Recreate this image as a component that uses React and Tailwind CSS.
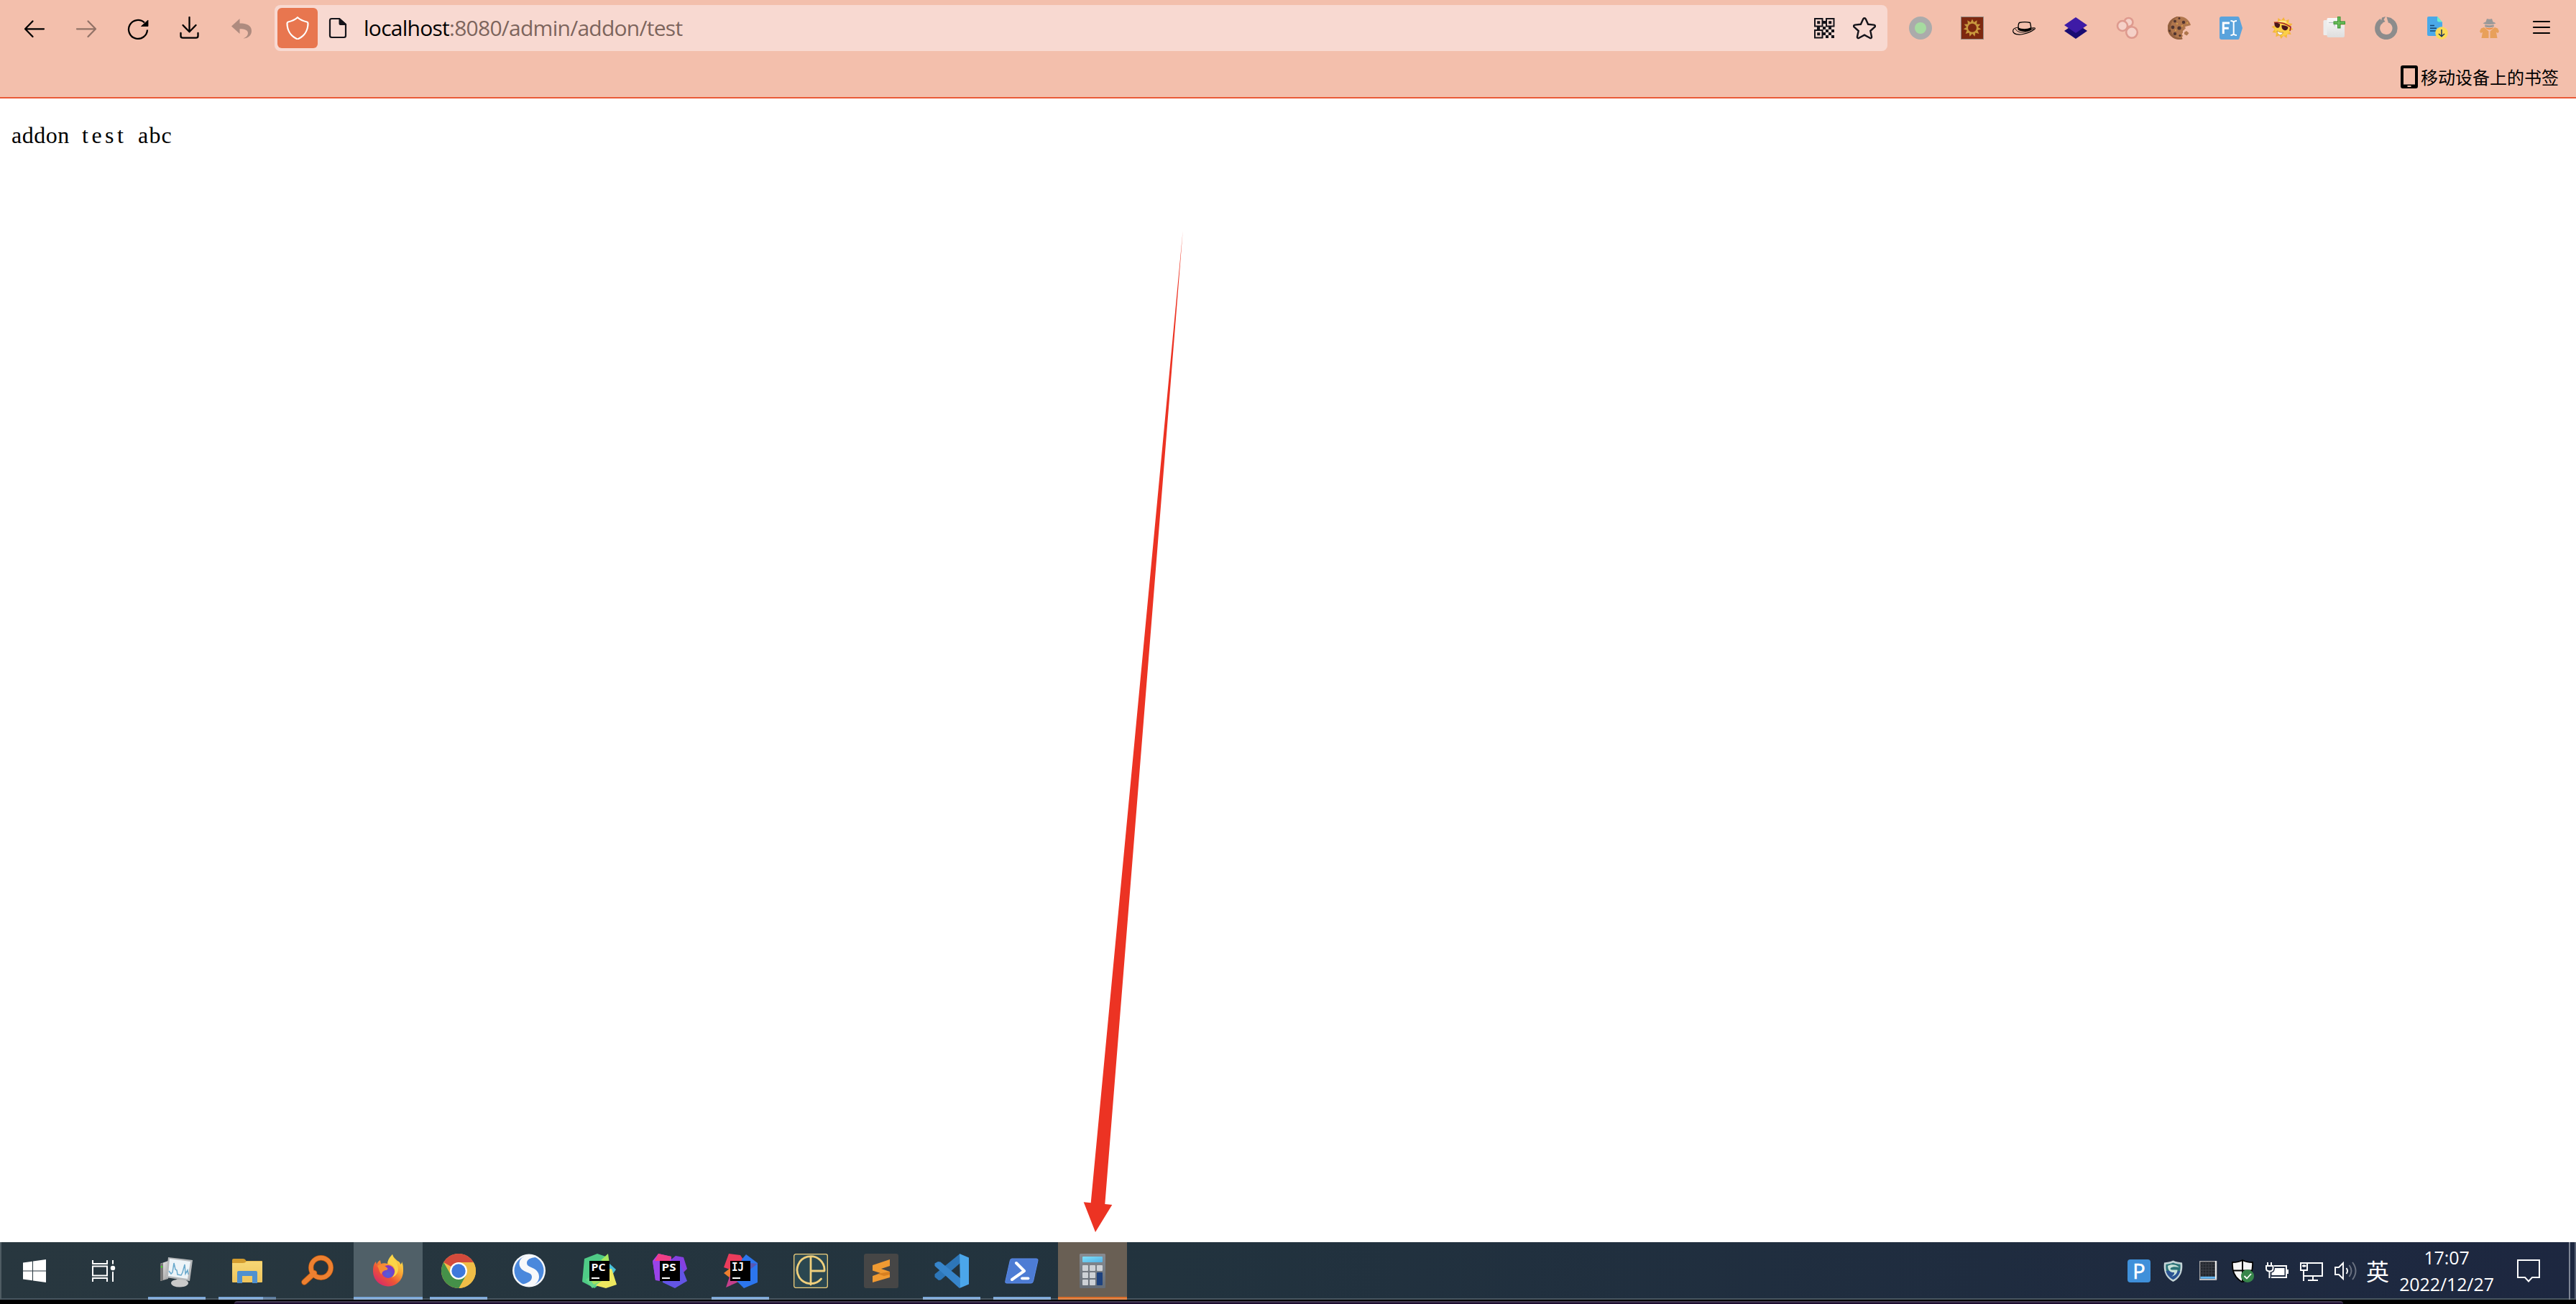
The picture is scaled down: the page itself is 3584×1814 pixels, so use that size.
import React from "react";

/* ---------- browser toolbar icons (drawn on a 32 unit box) ---------- */

function Svg({ children, className = "w-8 h-8", box = "0 0 32 32" }) {
  return (
    <svg viewBox={box} className={"block shrink-0 " + className} fill="none">
      {children}
    </svg>
  );
}

const line = {
  stroke: "#000",
  strokeWidth: 2.3,
  strokeLinecap: "round",
  strokeLinejoin: "round",
};

/* Outline of a star with the given number of points. */
function starPoints(count, cx, cy, outer, inner, turn = 0) {
  return Array.from({ length: count * 2 }, (_, i) => {
    const r = i % 2 === 0 ? outer : inner;
    const a = (Math.PI * i) / count - Math.PI / 2 + turn;
    return (cx + r * Math.cos(a)).toFixed(2) + "," + (cy + r * Math.sin(a)).toFixed(2);
  }).join(" ");
}

const BackIcon = () => (
  <Svg>
    <path d="M29 17.300H3.500M13.500 6.500 3 17.300 13.500 28" {...line} />
  </Svg>
);

const ForwardIcon = () => (
  <Svg>
    <g opacity="0.4">
      <path d="M3 17.300h25.500M18.500 6.500 29 17.300 18.500 28" {...line} />
    </g>
  </Svg>
);

const ReloadIcon = () => (
  <Svg>
    <path d="M29 18.500A13 13 0 1 1 25 8.500" {...line} strokeLinecap="butt" />
    <path d="M30 5v8.500h-9.500z" fill="#000" stroke="#000" strokeWidth="0.8" strokeLinejoin="round" />
  </Svg>
);

const DownloadIcon = () => (
  <Svg>
    <path d="M15.500 1v20M6.500 12l9 9.300L24.500 12" {...line} />
    <path d="M3.500 23v4q0 2.700 3 2.700h18q3 0 3-2.700v-4" {...line} />
  </Svg>
);

const UndoIcon = () => (
  <Svg>
    <path
      d="M2 13.500 13.500 3v6.500C23 9.500 30 12 30 20c0 6-5 10.500-11.500 10.500C23 28.500 25 26 25 23c0-4-4-5.800-11.500-5.800V24z"
      fill="#ae8b7f"
    />
  </Svg>
);

const ShieldIcon = () => (
  <Svg>
    <path
      d="M16 1.300c3.500 3.200 7.500 5 13 6.200 1 .2 1.500.9 1.500 2 0 9.500-5 17.500-13.300 21.500-.9.400-1.500.4-2.400 0C6.500 27 1.500 19 1.500 9.500c0-1.100.5-1.800 1.500-2C8.500 6.300 12.500 4.500 16 1.300z"
      stroke="#fff"
      strokeWidth="2.200"
    />
  </Svg>
);

const PageIcon = () => (
  <Svg className="w-[26px] h-[30px]" box="0 0 26 30">
    <path d="M15 2H4.500Q2 2 2 4.500v21Q2 28 4.500 28h17q2.500 0 2.500-2.500V10z" stroke="#15141a" strokeWidth="2.200" />
    <path d="M14.500 1h1L25 9.500V11h-8.500q-2 0-2-2z" fill="#15141a" />
  </Svg>
);

const QrIcon = () => (
  <Svg className="w-[29px] h-[29px]" box="0 0 29 29">
    <path d="M1 1h10.500v10.500H1zM17 1h10.500v10.500H17zM1 17h10.500v10.500H1z" stroke="#15141a" strokeWidth="2" />
    <path
      d="M4.200 4.200h4v4h-4zM20.200 4.200h4v4h-4zM4.200 20.200h4v4h-4zM12 4h4v4h-4zM4 12h4v4H4zM12 12h4v4h-4zM20 12h4v4h-4zM16 16h4v4h-4zM24 16h4v4h-4zM12 20h4v4h-4zM20 20h4v4h-4zM16 24h4v4h-4zM24 24h4v4h-4z"
      fill="#15141a"
    />
  </Svg>
);

const StarIcon = () => (
  <Svg>
    <path
      d="M16 2.200c.8 0 1.400.4 1.800 1.300l3.300 7.300 8 .8c1.800.2 2.400 1.900 1.100 3.100l-5.900 5.300 1.700 8c.3 1.700-1 2.700-2.500 1.800L16 25.600l-7.500 4.200c-1.500.9-2.800-.1-2.500-1.800l1.700-8-5.900-5.300c-1.300-1.200-.7-2.900 1.100-3.100l8-.8 3.300-7.300c.4-.9 1-1.300 1.800-1.300z"
      stroke="#15141a"
      strokeWidth="2.400"
    />
  </Svg>
);

/* ---------- extension icons ---------- */

const RingIcon = () => (
  <Svg>
    <circle cx="16" cy="16" r="16" fill="#ababab" />
    <circle cx="16" cy="16" r="8" fill="#a6dba0" />
  </Svg>
);

const SunTileIcon = () => (
  <Svg>
    <rect x="0.500" y="0.500" width="31" height="31" fill="#7e2810" stroke="#8f8780" />
    <polygon points={starPoints(11, 16, 15.8, 12.4, 8)} fill="#c9983e" />
    <circle cx="16" cy="15.800" r="6" fill="#7e2810" />
  </Svg>
);

const HatIcon = () => (
  <Svg>
    <path d="M8.500 17.500C7.700 13 8.200 10 9.500 8.500c4-1 11-1 15 0 .8 2.500 1 5 1.500 8.500" stroke="#000" strokeWidth="1.300" />
    <path d="M7.500 15c5 3 13 3 18 0l1 3c-2 2-5.500 3-9.500 2.800-5 0-8-1-9.500-2.500z" fill="#000" />
    <path d="M8 15c-5 .5-8 2.500-7.200 6 1 3.500 7.200 5 13.700 3.500 7-1.500 15-5 16.800-7.500.5-1.500-1.500-1.500-4.800-.8" stroke="#000" strokeWidth="1.200" />
    <path d="M4 17c2 5 9 6 15 4l11-4" stroke="#000" strokeWidth="0.900" />
  </Svg>
);

const LayersIcon = () => (
  <Svg>
    <path d="M16 9l16 11-16 11L0 20z" fill="#190c72" />
    <path d="M16 1l16 11-16 11L0 12z" fill="#3e1ba6" />
  </Svg>
);

const BubblesIcon = () => (
  <Svg>
    <g fill="#f5d1c8" stroke="#de9a8e" strokeWidth="2.600">
      <circle cx="17.500" cy="8" r="6" />
      <circle cx="9" cy="13" r="7" />
      <circle cx="22" cy="22" r="7.800" />
    </g>
  </Svg>
);

const CookieIcon = () => (
  <Svg>
    <path d="M16 0a16 16 0 1 0 4.500 31.300c-1-2-1-3.500.8-4.300-2-1.500-2-3.500 0-4.500-1-2 0-3.500 2-4-.8-3 .5-5 3.200-5l5.500-1.500C30 4.500 24 0 16 0z" fill="#b0764d" />
    <path d="M16 0a16 16 0 1 0 4.500 31.300l-.5-1.800C10 31 4 24 4 15.500 4 8 9 2 16 0z" fill="#93603f" />
    <g fill="#523630">
      <circle cx="10" cy="6.500" r="2" />
      <circle cx="7" cy="15" r="2.400" />
      <circle cx="16" cy="16" r="2.600" />
      <circle cx="22" cy="8" r="2.200" />
      <circle cx="10" cy="24" r="2.200" />
      <circle cx="17" cy="26.500" r="1.600" />
      <circle cx="16" cy="2.500" r="1.500" />
      <circle cx="2.600" cy="20" r="1.400" />
    </g>
    <g fill="#e0a84a">
      <circle cx="13" cy="10" r="1" />
      <circle cx="20" cy="13" r="1" />
      <circle cx="11" cy="19" r="1" />
      <circle cx="27" cy="9" r="1" />
    </g>
    <path d="M23 22l3-2 3.500 3-3 3.500-3.500-2zM22 16l2-1.500 1 2-2 1.300z" fill="#b0764d" />
  </Svg>
);

const FieldIcon = () => (
  <Svg>
    <path d="M3 0h22.500q1.500 0 2 1.500L32 16l-4.500 14.500q-.5 1.500-2 1.500H3q-3 0-3-3V3q0-3 3-3z" fill="#5aa3dc" />
    <path d="M5.300 24V9H14M5.300 16.300h7.500" stroke="#fff" strokeWidth="3" />
    <path d="M15.500 6q3.500 0 4.200 2Q20.500 6 24 6M19.700 8v16M15.500 26q3.500 0 4.200-2 .8 2 4.300 2" stroke="#fff" strokeWidth="2" />
  </Svg>
);

const CoolSunIcon = () => (
  <Svg>
    <polygon points={starPoints(12, 15.5, 16, 15.2, 10.8, 0.12)} fill="#f6b73a" />
    <circle cx="15.500" cy="16" r="11" fill="#fbcf47" />
    <path d="M8 9q6-4 13-1" stroke="#fde98a" strokeWidth="2" />
    <path d="M4 8.500c7-1 16 1 23 6l-1 5.500" stroke="#a8252a" strokeWidth="1.600" />
    <path d="M4.500 9c2.500-.500 6 0 7.500 1.500.5 3.500-1.200 5.700-3.700 5.200S4 12 4.500 9zM14.500 12c3.500 0 7 1 9 2.800-.3 3.700-2.800 5-5.500 4.200s-4-3.700-3.500-7z" fill="#4a171b" />
    <path d="M8 20c3.500 2 5.500 2.500 8.500 2-1 3-3.300 4-5 3.500S8 22.500 8 20z" fill="#fff" stroke="#a8611c" strokeWidth="0.600" />
  </Svg>
);

const AddTabIcon = () => (
  <Svg>
    <defs>
      <linearGradient id="tabpaper" x1="0" y1="0" x2="0" y2="1">
        <stop offset="0" stopColor="#f8f8f8" />
        <stop offset="1" stopColor="#dedede" />
      </linearGradient>
    </defs>
    <rect x="0.500" y="5" width="16" height="21" rx="1.500" fill="#ececec" />
    <path d="M5.500 3.500Q5.500 2 7 2h13v10h10v15q0 2-2 2H7.500q-2 0-2-2z" fill="url(#tabpaper)" />
    <path d="M8 8.500h8v5" stroke="#b8bcc4" strokeWidth="1.200" />
    <path d="M20 0h4.500v6.500H31v4.500h-6.500V16.500H20V11h-5.500V6.500H20z" fill="#3f9a36" />
    <path d="M21.300 1h1.800v7H30v1.800h-6.900v5.500h-1.800V9.800H15.500V8h5.800z" fill="#73c262" />
  </Svg>
);

const LoopIcon = () => (
  <Svg>
    <path d="M21.500 5.600A12.200 12.200 0 1 1 9.500 6" stroke="#8c8c8c" strokeWidth="7" />
    <path d="M10 1.500L15 0l-2.500 4.500 2 2.500L8 10z" fill="#8c8c8c" />
    <path d="M16.500 0.500L23 2l.5 5-4.500 2z" fill="#8c8c8c" />
  </Svg>
);

const FileDownIcon = () => (
  <Svg>
    <path d="M3 0h12l7 8v17q0 2-2 2H3q-2 0-2-2V2q0-2 2-2z" fill="#4aa9e8" />
    <path d="M15 0l7 7.500h-5q-2 0-2-2z" fill="#6cf0c9" />
    <path d="M5 12.500h6M5 16.300h9M5 20h9" stroke="#14456f" strokeWidth="1.400" />
    <circle cx="21" cy="23" r="8.700" fill="#fbdb55" />
    <path d="M21 18v9.500M17 24l4 3.800 4-3.800" stroke="#16325c" strokeWidth="1.500" />
  </Svg>
);

const SpyIcon = () => (
  <Svg>
    <path d="M6.500 9.500q2-1.500 4-2l1.500-4.500q4 1.500 7 0l1.500 4.500q2.500.5 4 2-3.500 1.500-9 1.500t-9-1.500zM9.500 11.500q6 1.500 12 0l.5 2.500q-6.500 2.500-13 0z" fill="#999" />
    <path d="M9.500 15q6 2.500 12 0-2 3.300-6 3.300t-6-3.300z" fill="#ee9040" />
    <path d="M4 16.500l4-1.500 6.500 5.500V30H4.500l1.500-8-2.500 1L2 20.500zM27 16.500L23 15l-6.500 5.500V30h10L25 22l2.500 1 1.500-2.500z" fill="#e8a05a" />
  </Svg>
);

const MenuIcon = () => (
  <Svg>
    <path d="M5 7h22M5 15h22M5 23h22" stroke="#000" strokeWidth="2.200" strokeLinecap="round" />
  </Svg>
);

const PhoneIcon = () => (
  <Svg className="w-6 h-8" box="0 0 24 32">
    <path fillRule="evenodd" d="M3 0h18q3 0 3 3v26q0 3-3 3H3q-3 0-3-3V3q0-3 3-3zM4 4v22.500h16V4zM9.500 28v2h5v-2z" fill="#000" />
  </Svg>
);

/* ---------- taskbar icons (drawn on a 48 unit box) ---------- */

function Big({ children }) {
  return (
    <Svg className="w-12 h-12" box="0 0 48 48">
      {children}
    </Svg>
  );
}

const WindowsIcon = () => (
  <Big>
    <path d="M8 12.500l13-1.800v12.800H8zM22 10.500L40 8v15.500H22zM8 24.500h13v12.800L8 35.500zM22 24.500h18V40l-18-2.500z" fill="#fff" />
  </Big>
);

const TaskViewIcon = () => (
  <Big>
    <path d="M9 9v5h20V9M9 17.500h20v13H9zM9 39v-5h20v5M37 9v5.500M37 25v14" stroke="#fff" strokeWidth="2" />
    <circle cx="37" cy="20" r="3.200" fill="#fff" />
  </Big>
);

const MonitorIcon = () => (
  <Big>
    <defs>
      <linearGradient id="metal" x1="0" y1="0" x2="1" y2="1">
        <stop offset="0" stopColor="#f2f2f2" />
        <stop offset="1" stopColor="#9b9b9b" />
      </linearGradient>
    </defs>
    <path d="M1 14l11-4v25L1 38z" fill="url(#metal)" />
    <path d="M1 14l4-1v24l-4 1z" fill="#777" />
    <rect x="2" y="17" width="2" height="2.500" fill="#48d62e" />
    <path d="M24 34h9l1 7H23z" fill="#999" />
    <ellipse cx="28" cy="41" rx="12" ry="5.500" fill="#c9c9c9" />
    <path d="M12 5l34 4-4 29L9 33z" fill="#b5b8ba" />
    <path d="M14 7l29 4-4 24-27-4z" fill="#edf4f8" />
    <path d="M13 24l3 4 2-2 2-13 2 9 2 1 1 6 5 1 2-4 3-11 1 13 3-5 1 6" stroke="#6aa9cc" strokeWidth="1.500" />
  </Big>
);

const FolderIcon = () => (
  <Big>
    <defs>
      <linearGradient id="fold" x1="0" y1="0" x2="0" y2="1">
        <stop offset="0" stopColor="#f7d775" />
        <stop offset="1" stopColor="#eec45c" />
      </linearGradient>
    </defs>
    <path d="M3 9q0-2 2-2h13q3 0 4.500 3H45v9H3z" fill="#d39c2e" />
    <path d="M3 13h15q3 0 5-2.500h20.500Q45 10.500 45 12v27q0 1-1 1H4q-1 0-1-1z" fill="url(#fold)" />
    <path d="M10 41V26q0-2 2-2h24q2 0 2 2v15h-7V31H17v10z" fill="#4f90cf" />
  </Big>
);

const EverythingIcon = () => (
  <Big>
    <path d="M5.500 39.500L19 27" stroke="#b65710" strokeWidth="8.500" strokeLinecap="round" />
    <circle cx="28.500" cy="19.500" r="13.800" stroke="#b65710" strokeWidth="7.400" />
    <path d="M5.500 39.500L19 27" stroke="#ee8030" strokeWidth="6.800" strokeLinecap="round" />
    <circle cx="28.500" cy="19.500" r="13.800" stroke="#ee8030" strokeWidth="6" />
  </Big>
);

const FirefoxIcon = () => (
  <Big>
    <defs>
      <linearGradient id="ffBody" x1="0.850" y1="0.100" x2="0.200" y2="0.950">
        <stop offset="0" stopColor="#fbe04a" />
        <stop offset="0.350" stopColor="#f9a233" />
        <stop offset="0.650" stopColor="#ee5536" />
        <stop offset="1" stopColor="#d92a68" />
      </linearGradient>
      <radialGradient id="ffCore" cx="0.500" cy="0.700" r="0.700">
        <stop offset="0" stopColor="#4f62d8" />
        <stop offset="1" stopColor="#8b2fc0" />
      </radialGradient>
    </defs>
    <path d="M30 1c1 4 4 6 7 9 3 1 4 3 4 5 2-1 2-3 2-4 2 4 2 8 2 13a21 21 0 0 1-42 1c0-7 1-11 4-14l1 4c1-3 3-5 5-6l1 5c3-1 6-1 9 0 0-5 4-8 7-13z" fill="url(#ffBody)" />
    <circle cx="24" cy="25" r="9" fill="url(#ffCore)" />
    <path d="M30 1c-4 4-7 8-6 13 2 1 6 1 8 5 3 5 1 11-3 14 7-2 11-9 8-17 0-6-7-8-7-15z" fill="#fbd548" />
    <path d="M9 17c3-3 9-2 14 3 1 1 0 3-3 3-3 1-5 3-5 6-4-4-3-7-6-12z" fill="#f78c33" />
  </Big>
);

const ChromeIcon = () => (
  <Big>
    <circle cx="24" cy="24" r="24" fill="#f0bd47" />
    <path d="M24 24L3.200 12A24 24 0 0 1 44.800 12z" fill="#d34a3c" />
    <path d="M24 24L34.400 30 24.500 48A24 24 0 0 1 3.200 12L13.600 30z" fill="#459149" />
    <path d="M24 12h20.800A24 24 0 0 1 24.500 48L35 30z" fill="#f0bd47" />
    <circle cx="24" cy="24" r="12" fill="#fff" />
    <circle cx="24" cy="24" r="9.700" fill="#3e78dc" />
  </Big>
);

const SogouIcon = () => (
  <Big>
    <circle cx="24" cy="23.500" r="23" fill="#f4f6f8" />
    <circle cx="24" cy="23.500" r="20.500" fill="#4a88dc" />
    <path
      d="M26 2C17 2 10.500 7 10.500 13.500c0 7 5 10 11 12.500 4.500 1.500 6.500 3 6.500 6.500 0 5-5 8.500-13 10 4 2.500 8 3 12 2.500C34 43 38 38 38 32c0-7-5-10.500-11-13-4-1.500-6-3-6-6C21 8 26 5.500 34 5z"
      fill="#f7f8fa"
    />
  </Big>
);

function JetLabel({ text, mono }) {
  return (
    <g>
      <rect x="10" y="10" width="28" height="28" fill="#000" />
      <text
        x={mono ? 12 : 12.5}
        y="23.500"
        fill="#fff"
        fontSize={mono ? 15 : 14.5}
        fontWeight="700"
        fontFamily={mono ? "'DejaVu Sans Mono', monospace" : "'Open Sans', sans-serif"}
        textLength={mono ? 17 : 20}
        lengthAdjust="spacingAndGlyphs"
      >
        {text}
      </text>
      <rect x="13" y="33" width="11" height="2" fill="#fff" />
    </g>
  );
}

const PyCharmIcon = () => (
  <Big>
    <path d="M3 7L21 0l12 4-5 30-8 12-3 2L0 39z" fill="#4fcb86" />
    <path d="M26 9L36 0l2 14z" fill="#a5e85f" />
    <path d="M36 12l11 10-7 10-8-6z" fill="#49bfd8" />
    <path d="M41 21l7 22-15 5-19-5 10-20z" fill="#eee85f" />
    <path d="M5 36l12-8 10 10-7 5-6 5z" fill="#63d58c" />
    <path d="M12 37h18l-14 6z" fill="#a4e060" />
    <JetLabel text="PC" />
  </Big>
);

const PhpStormIcon = () => (
  <Big>
    <path d="M0 10L8 0l18 4 0 14L6 37H4z" fill="#b23ff0" />
    <path d="M8 0l18 4-3 8-20-2z" fill="#ef3f86" />
    <path d="M26 8l6-5 11 2 5 16-8 8-14-6z" fill="#8540e0" />
    <path d="M37 10l11 28-17 10-17-8V30z" fill="#6355e6" />
    <path d="M0 10l10 0v28L4 37z" fill="#9a43e8" />
    <JetLabel text="PS" />
  </Big>
);

const IntelliJIcon = () => (
  <Big>
    <path d="M1 19L8 0l16 2 8 12-16 10z" fill="#ea3c5b" />
    <path d="M1 27l9-7v14z" fill="#ef7e2e" />
    <path d="M4 47l6-18 14 9z" fill="#c43f8c" />
    <path d="M32 1l16 12v27L29 48 19 38 26 8z" fill="#2c76ee" />
    <path d="M38 13l10 1-12 9z" fill="#5757b5" />
    <JetLabel text="IJ" mono />
  </Big>
);

const CeIcon = () => (
  <Big>
    <rect x="0.700" y="0.700" width="46.600" height="46.600" rx="2.500" fill="#2b4750" stroke="#f0cf7c" strokeWidth="1.300" />
    <path d="M38.500 35A19 19 0 1 1 43 24H24M24 5v38" stroke="#f0cf7c" strokeWidth="2.800" strokeLinecap="round" strokeLinejoin="round" />
  </Big>
);

const SublimeIcon = () => (
  <Big>
    <rect width="48" height="48" rx="3" fill="#464646" />
    <path d="M12 16L36 8v9l-12 4 12 4v8L12 40v-9l11-4-11-3.500z" fill="#f09a32" />
    <path d="M36 25v4l-8 2-9-3 5-1z" fill="#d77f20" />
  </Big>
);

const CodeIcon = () => (
  <Big>
    <path d="M35 0.500L36 13 9 36.500 6 37l-5.500-4.500v-4z" fill="#2d76b8" />
    <path d="M0.500 15.500v-2L5 11l3.500.5L36 34v13.500l-1.500.2L0.500 17z" fill="#3785cb" />
    <path d="M35 0l13 5.500v37L35 48l1-1z" fill="#4ba6ea" />
  </Big>
);

const PowerShellIcon = () => (
  <Big>
    <path d="M10 7h34q2.500 0 2 2.500l-6.500 29q-.6 2.500-3 2.500h-34Q.2 41 .8 38.500l6.500-29Q7.800 7 10 7z" fill="#4d7cd4" stroke="#5c8bea" />
    <path d="M16 13l11 11-17 12" stroke="#fff" strokeWidth="4" strokeLinecap="round" strokeLinejoin="round" />
    <path d="M24 34.300h8.500" stroke="#fff" strokeWidth="3.800" strokeLinecap="round" />
  </Big>
);

const CALC_KEYS = [
  [10, 16], [20, 16], [30, 16],
  [10, 26], [20, 26],
  [10, 36], [20, 36],
];

const CalculatorIcon = () => (
  <Big>
    <defs>
      <linearGradient id="calcBody" x1="0" y1="0" x2="0" y2="1">
        <stop offset="0" stopColor="#878b91" />
        <stop offset="1" stopColor="#656d77" />
      </linearGradient>
      <linearGradient id="calcScreen" x1="0" y1="0" x2="1" y2="1">
        <stop offset="0" stopColor="#7de0fa" />
        <stop offset="1" stopColor="#54b0e4" />
      </linearGradient>
    </defs>
    <rect x="6" y="0" width="36" height="48" rx="1.500" fill="url(#calcBody)" />
    <rect x="10" y="4" width="28" height="8" rx="1" fill="url(#calcScreen)" />
    {CALC_KEYS.map(([x, y]) => (
      <rect key={x + "-" + y} x={x} y={y} width="8" height="8" rx="1" fill="#cdd1d6" />
    ))}
    <rect x="30" y="26" width="8" height="18" rx="1" fill="#1e427e" />
  </Big>
);

/* ---------- tray icons ---------- */

const ParkIcon = () => (
  <div className="flex h-8 w-8 items-center justify-center rounded-[4px] bg-[#3f90da] font-['Open_Sans',sans-serif] text-[29px] leading-8 text-white [-webkit-text-stroke:0.6px_white]">
    P
  </div>
);

const GreenShieldIcon = () => (
  <Svg>
    <path d="M15.500 1.500c4 2 8 2.500 12.500 3 1.500 12-2 21-12.500 26.500C5 25.500 1.500 16 3 4.500c4.500-.5 8.500-1 12.500-3z" fill="#c3d3d6" />
    <path d="M15.500 4.500c3.500 1.500 6.500 2 10 2.300C26.500 16 23.500 23.500 15.500 28 7.500 23.500 4.500 16 5.500 6.800c3.500-.3 6.500-.8 10-2.300z" fill="#2c7378" />
    <path d="M5.500 16h19.800c-1 5-4.300 9.300-9.800 12-5.500-2.700-9-7-10-12z" fill="#2b5493" />
    <path d="M8 9c4-2.500 11-2.500 16 2-5-1-10-1-12 1-1 1.500 0 2.500 2 2.500h7.500c0 4.500-3 8-8.500 9.500 3-2 4.500-4 4-6-5 .5-9-2.500-9-9z" fill="#c8e2d9" />
  </Svg>
);

const PadIcon = () => (
  <Svg>
    <rect x="4.700" y="2.700" width="23" height="25" fill="#22262d" stroke="#aaa" strokeWidth="1.300" />
    <path d="M9 3v21M13 3v21M17 3v21M21 3v21M5 7h22M5 11h22M5 15h22M5 19h22" stroke="#3c4048" strokeWidth="1" />
    <path d="M26.800 2v25" stroke="#eee" strokeWidth="2" />
    <path d="M5.500 25.300h20.500" stroke="#64b5f0" strokeWidth="3" />
    <path d="M4 28.200h24" stroke="#eee" strokeWidth="1" />
  </Svg>
);

const DefenderIcon = () => (
  <Svg>
    <path d="M16 1c4 2.500 9 3 14 3 .8 12-3 22-14 27.500C5 26 1.200 16 2 4c5 0 10-.500 14-3z" fill="#f5f5f5" stroke="#000" strokeWidth="1.800" />
    <path d="M16 1v30M2 15.500h28" stroke="#000" strokeWidth="2" />
    <circle cx="23" cy="23" r="9" fill="#37854a" />
    <path d="M18.500 23l3.500 3.500 6-6.500" stroke="#fff" strokeWidth="1.800" />
  </Svg>
);

const BatteryIcon = () => (
  <Svg>
    <path d="M12 9h17v16H8M3 4v5M8 4v5" stroke="#fff" strokeWidth="2" />
    <path d="M1 9h9.500v3.500q0 4-4.750 4T1 12.500z" stroke="#fff" strokeWidth="2" />
    <path d="M13 12h13.500v10H8.500v-3.500q4.500-1 4.500-6.500z" fill="#fff" />
    <path d="M29 14h3v6h-3z" fill="#fff" />
    <path d="M5.500 17v9" stroke="#fff" strokeWidth="2" />
  </Svg>
);

const NetworkIcon = () => (
  <Svg>
    <path d="M11 5h20v18H5V16M5 16v14M1 5h9v10H1zM3 9h2M6.500 9h2M18 23v6M11 29h14" stroke="#fff" strokeWidth="2" />
    <rect x="4" y="7.500" width="3.500" height="3" fill="#fff" />
  </Svg>
);

const SpeakerIcon = () => (
  <Svg>
    <path d="M1 11h5l6-6v22l-6-6H1z" stroke="#fff" strokeWidth="1.900" />
    <path d="M16.500 12q3 4 0 8" stroke="#fff" strokeWidth="1.900" />
    <path d="M20.500 8q6 8 0 16M25 4q9 12 0 24" stroke="#fff" strokeOpacity="0.350" strokeWidth="1.900" />
  </Svg>
);

const NoticeIcon = () => (
  <Svg>
    <path d="M1 1h30v24H21l-5 5.500L11 25H1z" stroke="#fff" strokeWidth="2" />
  </Svg>
);

/* ---------- layout ---------- */

const NAV = [BackIcon, ForwardIcon, ReloadIcon, DownloadIcon, UndoIcon];

const EXTENSIONS = [
  RingIcon, SunTileIcon, HatIcon, LayersIcon, BubblesIcon, CookieIcon, FieldIcon,
  CoolSunIcon, AddTabIcon, LoopIcon, FileDownIcon, SpyIcon, MenuIcon,
];

const TASKS = [
  { icon: MonitorIcon, state: "open" },
  { icon: FolderIcon, state: "stacked" },
  { icon: EverythingIcon },
  { icon: FirefoxIcon, state: "active" },
  { icon: ChromeIcon, state: "open" },
  { icon: SogouIcon },
  { icon: PyCharmIcon },
  { icon: PhpStormIcon },
  { icon: IntelliJIcon, state: "open" },
  { icon: CeIcon },
  { icon: SublimeIcon },
  { icon: CodeIcon, state: "open" },
  { icon: PowerShellIcon, state: "open" },
  { icon: CalculatorIcon, state: "alert" },
];

const TASK_BACKGROUND = {
  active: "bg-[#506068]",
  alert: "bg-[#695f54]",
};

function Underline({ state }) {
  if (state === "open") return <div className="mx-2 h-1 border-b-2 border-[#90b1d4] bg-[#7aa6d8]" />;
  if (state === "active") return <div className="h-1 border-b-2 border-[#90b1d4] bg-[#7aa6d8]" />;
  if (state === "alert") return <div className="h-1 border-b-2 border-[#de8a52] bg-[#d96d2a]" />;
  if (state === "stacked")
    return (
      <div className="mx-2 flex h-1">
        <div className="w-[62px] border-b-2 border-[#90b1d4] bg-[#7aa6d8]" />
        <div className="w-[18px] border-b-2 border-[#7189a2] bg-[#58799b]" />
      </div>
    );
  return null;
}

function Toolbar() {
  return (
    <header className="h-[137px] border-b-2 border-[#ea5a38] bg-[#f3bfac]">
      <div className="flex h-[78px] items-center">
        <div className="ml-8 flex w-[354px] gap-10">
          {NAV.map((Icon, i) => (
            <Icon key={i} />
          ))}
        </div>
        <div className="-ml-1 flex h-16 w-[2244px] items-center rounded-lg bg-[#f8d9d1]">
          <div className="ml-1 flex h-14 w-14 items-center justify-center rounded-md bg-[#e8764f]">
            <ShieldIcon />
          </div>
          <div className="ml-[15px]">
            <PageIcon />
          </div>
          <div className="ml-[23px] flex-1 whitespace-pre font-['Open_Sans','Noto_Sans',sans-serif] text-[30px] leading-[40px] tracking-[-0.74px] text-[#7d655d]">
            <span className="text-black">localhost</span>:8080/admin/addon/test
          </div>
          <QrIcon />
          <div className="ml-[25px] mr-4">
            <StarIcon />
          </div>
        </div>
        <div className="ml-[30px] flex gap-10">
          {EXTENSIONS.map((Icon, i) => (
            <Icon key={i} />
          ))}
        </div>
      </div>
      <div className="mr-6 mt-[13px] flex h-8 items-center justify-end gap-1 font-['Noto_Sans_CJK_SC',sans-serif] text-2xl leading-8 text-black">
        <PhoneIcon />
        移动设备上的书签
      </div>
    </header>
  );
}

function Taskbar() {
  return (
    <footer className="flex h-20 bg-linear-to-r from-[#28373f] via-[#22333e] via-45% to-[#1d2740] shadow-[inset_2px_0_0_#4f5c63,inset_0_-2px_0_#485660]">
      <div className="flex w-24 items-center justify-center">
        <WindowsIcon />
      </div>
      <div className="mr-1.5 flex w-24 items-center justify-center">
        <TaskViewIcon />
      </div>
      <div className="flex gap-0.5">
        {TASKS.map(({ icon: Icon, state }, i) => (
          <div key={i} className={"flex w-24 flex-col " + (TASK_BACKGROUND[state] || "")}>
            <div className="flex h-[76px] items-center justify-center pt-1">
              <Icon />
            </div>
            <Underline state={state} />
          </div>
        ))}
      </div>
      <div className="ml-auto flex items-center">
        <div className="flex gap-4">
          <ParkIcon />
          <GreenShieldIcon />
          <PadIcon />
          <DefenderIcon />
          <BatteryIcon />
          <NetworkIcon />
          <SpeakerIcon />
        </div>
        <div className="ml-3 w-8 pb-0.5 font-['Noto_Sans_CJK_SC',sans-serif] text-[32px] leading-8 text-white">英</div>
        <div className="ml-[13px] w-[134px] text-center font-['Open_Sans','Noto_Sans',sans-serif] text-[25px] leading-[37px] tracking-[-0.1px] text-white">
          <div>17:07</div>
          <div>2022/12/27</div>
        </div>
        <div className="ml-[31px]">
          <NoticeIcon />
        </div>
        <div className="ml-10 h-20 w-2.5 border-l-2 border-r-2 border-l-[#7d8494] border-r-[#565f72]" />
      </div>
    </footer>
  );
}

export default function App() {
  return (
    <div className="relative flex h-[1814px] w-[3584px] flex-col overflow-hidden bg-white">
      <Toolbar />
      <main className="flex-1 pl-4 pt-[31px] font-['Liberation_Serif',serif] text-[32px] leading-[40px] text-black">
        <p className="flex whitespace-pre">
          <span className="w-24 tracking-[0.500px]">addon </span>
          <span className="w-20 pl-0.5 tracking-[4.500px]">test </span>
          <span className="tracking-[1.200px]">abc</span>
        </p>
      </main>
      <Taskbar />
      <div className="h-1.5 bg-black pl-[326px] pr-[324px] pt-0.5">
        <div className="h-1 rounded-t-xl border-t-2 border-[#443b55] bg-[#1d0d30]" />
      </div>
      <svg
        viewBox="0 0 140 1400"
        className="pointer-events-none absolute left-[1507px] top-[320px] h-[1400px] w-[140px]"
      >
        <path d="M138.700 1L30.300 1355L40.300 1356L17 1394L0.700 1352.300L10.700 1353.300z" fill="#ec3323" />
      </svg>
    </div>
  );
}
